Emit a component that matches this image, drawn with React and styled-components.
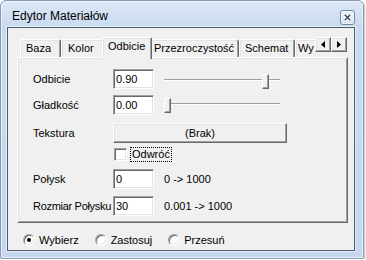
import React from "react";
import styled, { createGlobalStyle } from "styled-components";

const Global = createGlobalStyle`
  html, body { margin: 0; padding: 0; background: #ffffff; }
  body {
    font-family: "Liberation Sans", Arial, sans-serif;
    font-size: 11px;
    color: #000;
  }
  * { box-sizing: border-box; }
`;

const Window = styled.div`
  width: 364px;
  height: 259px;
  border: 1px solid #8a99b0;
  border-radius: 6px 6px 2px 2px;
  background: linear-gradient(#dde8f6, #c9daf0 26px, #c5d7ef);
  box-shadow: inset 0 0 0 1px rgba(255, 255, 255, 0.6), 1px 1px 2px rgba(0, 0, 0, 0.25);
  display: flex;
  flex-direction: column;
  padding: 0 8px 7px 6px;
`;

const TitleBar = styled.div`
  height: 26px;
  display: flex;
  align-items: flex-start;
  justify-content: space-between;
  flex: none;
`;

const Title = styled.div`
  font-size: 12px;
  line-height: 14px;
  margin: 8px 0 0 5px;
  color: #000;
`;

const CloseButton = styled.div`
  width: 15px;
  height: 15px;
  margin-top: 9px;
  border: 1px solid #7587a3;
  border-radius: 3px;
  background: linear-gradient(#eef3fa, #d3dfef);
  box-shadow: inset 0 0 0 1px rgba(255, 255, 255, 0.7);
  display: flex;
  align-items: center;
  justify-content: center;
`;

const Client = styled.div`
  flex: 1;
  border: 1px solid #4f5a6a;
  background: #f0f0f0;
  box-shadow: 0 0 0 1px rgba(255, 255, 255, 0.55);
  padding: 9px 6px 0 9px;
  display: flex;
  flex-direction: column;
`;

const TabRow = styled.div`
  display: flex;
  align-items: flex-start;
  height: 22px;
  margin-bottom: -2px;
  position: relative;
  z-index: 1;
`;

const TabList = styled.div`
  flex: 1;
  display: flex;
  align-items: flex-start;
  overflow: hidden;
  height: 22px;
  padding-left: 3px;
`;

const Tab = styled.div`
  flex: none;
  width: ${(p) => p.$w}px;
  height: ${(p) => (p.$active ? 22 : 18)}px;
  margin: ${(p) => (p.$active ? "0 -2px 0 -2px" : "2px 0 0 0")};
  padding-left: ${(p) => p.$pl}px;
  line-height: 16px;
  white-space: nowrap;
  background: #f0f0f0;
  border-top: 1px solid #ffffff;
  border-left: 1px solid #ffffff;
  border-right: 1px solid #696969;
  border-radius: 2px 2px 0 0;
  box-shadow: inset -1px 0 0 #a0a0a0, inset 1px 1px 0 #e3e3e3;
  position: relative;
  z-index: ${(p) => (p.$active ? 2 : 1)};
`;

const ScrollButtons = styled.div`
  display: flex;
  margin: 0 1px 0 0;
  flex: none;
`;

const ScrollButton = styled.div`
  width: 16px;
  height: 15px;
  background: #f0f0f0;
  border: 1px solid;
  border-color: #ffffff #696969 #696969 #ffffff;
  box-shadow: inset -1px -1px 0 #a0a0a0, inset 1px 1px 0 #e3e3e3;
  display: flex;
  align-items: center;
  justify-content: center;
`;

const Panel = styled.div`
  height: 166px;
  border: 1px solid;
  border-color: #ffffff #696969 #696969 #ffffff;
  box-shadow: inset 1px 1px 0 #e3e3e3, inset -1px -1px 0 #a0a0a0;
  padding: 11px 0 0 15px;
  display: flex;
  flex-direction: column;
`;

const Row = styled.div`
  display: flex;
  align-items: center;
  height: ${(p) => p.$h || 20}px;
  margin-top: ${(p) => p.$mt || 0}px;
`;

const Label = styled.div`
  width: 80px;
  flex: none;
  white-space: nowrap;
  letter-spacing: ${(p) => (p.$tight ? "-0.3px" : "0")};
`;

const TextBox = styled.input`
  width: 41px;
  height: 20px;
  flex: none;
  margin: 0;
  padding: 0 0 0 2px;
  font: inherit;
  color: #000;
  background: #ffffff;
  border: 1px solid;
  border-color: #a0a0a0 #ffffff #ffffff #a0a0a0;
  box-shadow: inset 1px 1px 0 #696969, inset -1px -1px 0 #e3e3e3;
  outline: none;
`;

const Slider = styled.div`
  position: relative;
  width: 116px;
  height: 20px;
  margin-left: 10px;
  margin-top: ${(p) => p.$dy}px;
  flex: none;
`;

const Track = styled.div`
  position: absolute;
  left: 0;
  right: 0;
  top: 9px;
  height: 2px;
  border-top: 1px solid #a0a0a0;
  border-bottom: 1px solid #ffffff;
`;

const Thumb = styled.div`
  position: absolute;
  top: 4px;
  width: 7px;
  height: 15px;
  background: #f0f0f0;
  border: 1px solid;
  border-color: #ffffff #696969 #696969 #ffffff;
  box-shadow: inset -1px -1px 0 #a0a0a0;
`;

const PushButton = styled.div`
  width: 174px;
  height: 20px;
  flex: none;
  background: #f0f0f0;
  border: 1px solid;
  border-color: #ffffff #696969 #696969 #ffffff;
  box-shadow: inset -1px -1px 0 #a0a0a0, inset 1px 1px 0 #e3e3e3;
  display: flex;
  align-items: center;
  justify-content: center;
`;

const Spacer = styled.div`
  width: 80px;
  flex: none;
`;

const CheckBox = styled.div`
  width: 13px;
  height: 13px;
  margin-left: 1px;
  flex: none;
  background: #ffffff;
  border: 1px solid;
  border-color: #a0a0a0 #ffffff #ffffff #a0a0a0;
  box-shadow: inset 1px 1px 0 #696969, inset -1px -1px 0 #e3e3e3;
`;

const FocusLabel = styled.div`
  margin-left: 3px;
  padding: 0 1px;
  line-height: 13px;
  border: 1px dotted #000;
`;

const RangeText = styled.div`
  margin-left: 10px;
  white-space: nowrap;
`;

const RadioRow = styled.div`
  display: flex;
  align-items: center;
  gap: 16px;
  margin: 11px 0 0 6px;
  height: 12px;
`;

const RadioItem = styled.label`
  display: flex;
  align-items: center;
  gap: 4px;
  line-height: 12px;
`;

const RadioCircle = styled.span`
  width: 12px;
  height: 12px;
  border-radius: 50%;
  background: #ffffff;
  border: 1px solid;
  border-color: #a0a0a0 #ffffff #ffffff #a0a0a0;
  box-shadow: inset 1px 1px 0 #696969, inset -1px -1px 0 #e3e3e3;
  display: flex;
  align-items: center;
  justify-content: center;
  flex: none;
  &::after {
    content: "";
    width: 4px;
    height: 4px;
    border-radius: 50%;
    background: ${(p) => (p.$checked ? "#000" : "transparent")};
  }
`;

const tabs = [
  { name: "Baza", w: 41, pl: 5 },
  { name: "Kolor", w: 43, pl: 6 },
  { name: "Odbicie", w: 50, pl: 5, active: true },
  { name: "Przezroczystość", w: 89, pl: 3 },
  { name: "Schemat", w: 56, pl: 5 },
  { name: "Wy", w: 24, pl: 2 },
];

const Arrow = ({ dir }) => (
  <svg width="4" height="7" viewBox="0 0 4 7">
    {dir === "left" ? (
      <path d="M4 0 L0 3.5 L4 7 Z" fill="#000" />
    ) : (
      <path d="M0 0 L4 3.5 L0 7 Z" fill="#000" />
    )}
  </svg>
);

export default function App() {
  return (
    <>
      <Global />
      <Window>
        <TitleBar>
          <Title>Edytor Materiałów</Title>
          <CloseButton>
            <svg width="9" height="9" viewBox="0 0 9 9">
              <path d="M1.5 1.5 L7.5 7.5 M7.5 1.5 L1.5 7.5" stroke="#ffffff" strokeWidth="3.4" />
              <path d="M1.8 1.8 L7.2 7.2 M7.2 1.8 L1.8 7.2" stroke="#3e4c63" strokeWidth="1.6" />
            </svg>
          </CloseButton>
        </TitleBar>
        <Client>
          <TabRow>
            <TabList>
              {tabs.map((t) => (
                <Tab key={t.name} $w={t.w} $pl={t.pl} $active={t.active}>
                  {t.name}
                </Tab>
              ))}
            </TabList>
            <ScrollButtons>
              <ScrollButton>
                <Arrow dir="left" />
              </ScrollButton>
              <ScrollButton>
                <Arrow dir="right" />
              </ScrollButton>
            </ScrollButtons>
          </TabRow>
          <Panel>
            <Row>
              <Label>Odbicie</Label>
              <TextBox readOnly value="0.90" />
              <Slider $dy={1}>
                <Track />
                <Thumb style={{ left: `${0.9 * (116 - 7)}px` }} />
              </Slider>
            </Row>
            <Row $mt={6}>
              <Label>Gładkość</Label>
              <TextBox readOnly value="0.00" />
              <Slider $dy={-2}>
                <Track />
                <Thumb style={{ left: "0px" }} />
              </Slider>
            </Row>
            <Row $mt={8}>
              <Label>Tekstura</Label>
              <PushButton>(Brak)</PushButton>
            </Row>
            <Row $mt={4} $h={15}>
              <Spacer />
              <CheckBox />
              <FocusLabel>Odwróć</FocusLabel>
            </Row>
            <Row $mt={7}>
              <Label>Połysk</Label>
              <TextBox readOnly value="0" />
              <RangeText>0 -&gt; 1000</RangeText>
            </Row>
            <Row $mt={7}>
              <Label $tight>Rozmiar Połysku</Label>
              <TextBox readOnly value="30" />
              <RangeText>0.001 -&gt; 1000</RangeText>
            </Row>
          </Panel>
          <RadioRow>
            <RadioItem>
              <RadioCircle $checked />
              Wybierz
            </RadioItem>
            <RadioItem>
              <RadioCircle />
              Zastosuj
            </RadioItem>
            <RadioItem>
              <RadioCircle />
              Przesuń
            </RadioItem>
          </RadioRow>
        </Client>
      </Window>
    </>
  );
}
